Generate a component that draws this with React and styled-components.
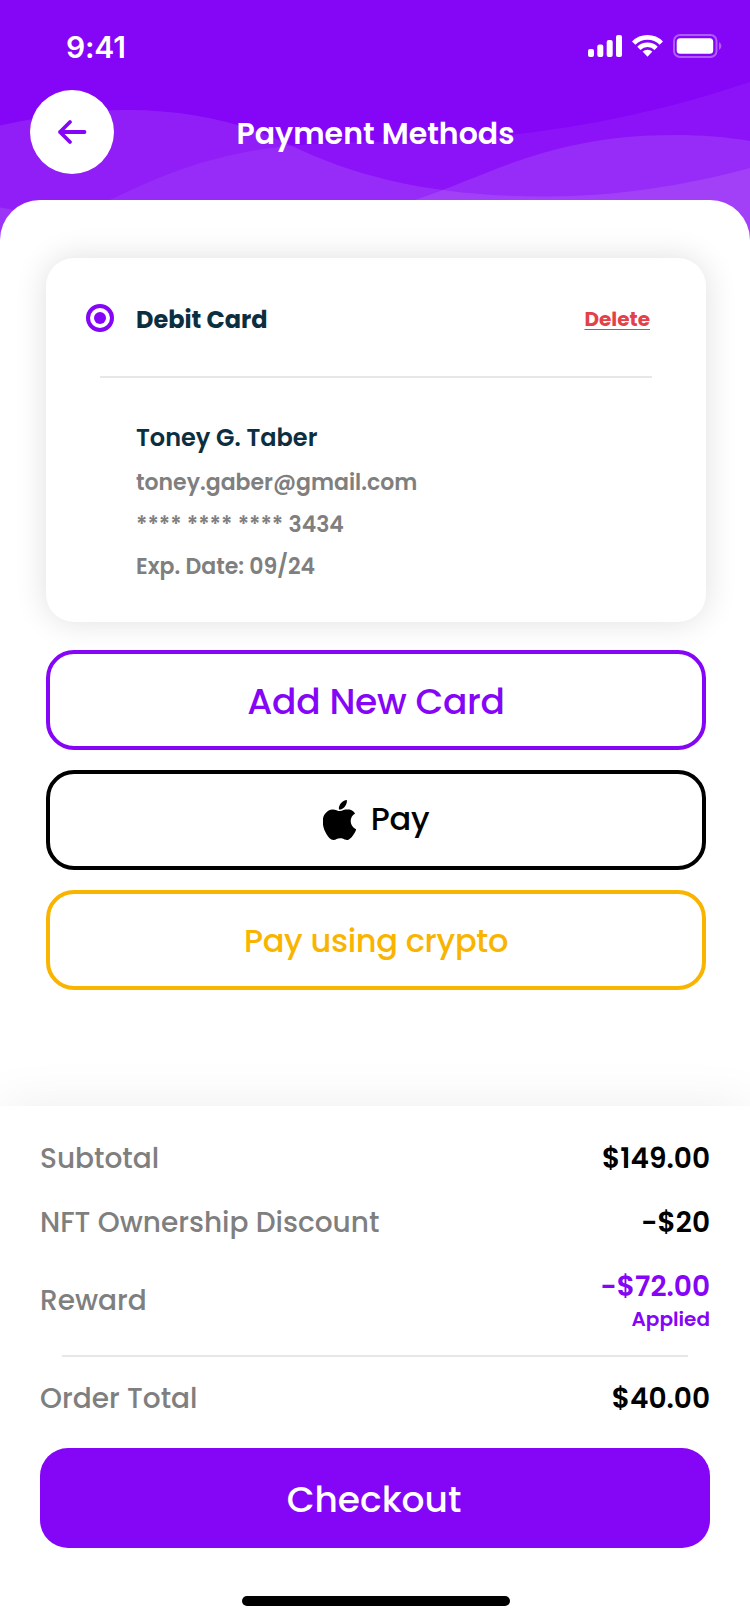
import React from "react";
import styled, { createGlobalStyle } from "styled-components";

const PURPLE = "#8505f7";
const NAVY = "#0c2e41";
const GREY = "#7f7f7f";
const YELLOW = "#f9b400";

const GlobalStyle = createGlobalStyle`
  * { box-sizing: border-box; }
  body {
    margin: 0;
    background: #fff;
    font-family: Poppins, Inter, sans-serif;
  }
  button {
    margin: 0;
    padding: 0;
    border: 0;
    background: none;
    font: inherit;
    cursor: pointer;
  }
`;

const Screen = styled.div`
  width: 750px;
  height: 1624px;
  display: flex;
  flex-direction: column;
  overflow: hidden;
  background: #fff;
`;

const Header = styled.header`
  position: relative;
  height: 240px;
  flex: none;
  color: #fff;
  background: ${PURPLE};
`;

const Waves = styled.svg`
  position: absolute;
  inset: 0;
  display: block;
`;

const StatusBar = styled.div`
  position: relative;
  height: 90px;
  padding: 2px 28px 0 65px;
  display: flex;
  align-items: center;
  justify-content: space-between;
`;

const Clock = styled.time`
  padding: 1px 0 0 1px;
  font: 600 30px/36px Inter, sans-serif;
  letter-spacing: -0.2px;
`;

const StatusIcons = styled.svg`
  display: block;
`;

const NavBar = styled.div`
  position: relative;
  height: 84px;
  padding: 0 30px;
  display: grid;
  grid-template-columns: 84px 1fr 84px;
  align-items: center;
`;

const BackButton = styled.button`
  width: 84px;
  height: 84px;
  border-radius: 50%;
  background: #fff;
  color: ${PURPLE};
  display: grid;
  place-items: center;
`;

const Title = styled.h1`
  margin: 0;
  padding: 3px 0 0 1px;
  text-align: center;
  font-size: 30px;
  line-height: 45px;
  font-weight: 600;
`;

const Sheet = styled.main`
  position: relative;
  flex: 1;
  margin-top: -40px;
  padding: 58px 44px 0 46px;
  border-radius: 40px 40px 0 0;
  background: #fff;
`;

const Card = styled.section`
  height: 364px;
  padding-top: 44px;
  border-radius: 28px;
  background: #fff;
  box-shadow: 0 0 32px rgba(0, 0, 0, 0.13);
`;

const CardHead = styled.div`
  height: 36px;
  padding: 0 56px 0 40px;
  display: flex;
  align-items: center;
  gap: 22px;
`;

const Radio = styled.span`
  width: 28px;
  height: 28px;
  margin-bottom: 4px;
  border: 4px solid ${PURPLE};
  border-radius: 50%;
  display: grid;
  place-items: center;

  &::after {
    content: "";
    width: 12px;
    height: 12px;
    border-radius: 50%;
    background: ${PURPLE};
  }
`;

const CardTitle = styled.h2`
  flex: 1;
  margin: 0;
  font-size: 24px;
  line-height: 36px;
  font-weight: 700;
  color: ${NAVY};
`;

const DeleteLink = styled.button`
  margin-bottom: 2px;
  font-size: 20px;
  line-height: 30px;
  font-weight: 700;
  color: #e34048;
  text-decoration: underline 1px;
  text-underline-offset: 3px;
  text-decoration-skip-ink: none;
`;

const Divider = styled.hr`
  height: 2px;
  margin: ${(p) => p.$margin};
  border: 0;
  background: #e7e7e7;
`;

const CardBody = styled.div`
  padding-left: 90px;
  display: flex;
  flex-direction: column;
`;

const Holder = styled.div`
  margin-bottom: 10px;
  font-size: 24px;
  line-height: 36px;
  font-weight: 600;
  color: ${NAVY};
`;

const Detail = styled.div`
  font-size: 22px;
  line-height: 33px;
  margin-bottom: 9px;
  font-weight: 600;
  color: ${GREY};
`;

const Options = styled.div`
  margin-top: 28px;
  display: flex;
  flex-direction: column;
  gap: 20px;
`;

const OptionButton = styled.button`
  height: 100px;
  padding: ${(p) => p.$pad || 0};
  border: 4px solid ${(p) => p.$color};
  border-radius: 28px;
  color: ${(p) => p.$color};
  font-size: ${(p) => p.$size}px;
  line-height: 1.5;
  font-weight: 500;
  letter-spacing: -0.3px;
  display: flex;
  align-items: center;
  justify-content: center;
  gap: 15px;
`;

const AppleLogo = styled.svg`
  width: 33px;
  height: 40px;
  margin-top: 2px;
`;

const Summary = styled.footer`
  position: relative;
  flex: none;
  height: 518px;
  padding: 32px 40px 0;
  background: #fff;
  box-shadow: 0 0 50px rgba(0, 0, 0, 0.07);
  display: flex;
  flex-direction: column;
`;

const SummaryRow = styled.div`
  margin-bottom: ${(p) => p.$gap}px;
  display: flex;
  align-items: center;
  justify-content: space-between;
  font-size: 28px;
  line-height: 42px;
`;

const Label = styled.span`
  font-weight: 500;
  color: ${GREY};
`;

const Amount = styled.span`
  display: flex;
  flex-direction: column;
  align-items: flex-end;
  font-weight: 600;
  color: ${(p) => p.$color || "#000"};
`;

const Note = styled.small`
  margin-top: -5px;
  padding-bottom: 1px;
  font-size: 20px;
  line-height: 32px;
`;

const CheckoutButton = styled.button`
  height: 100px;
  padding: 3px 2px 0 0;
  border-radius: 28px;
  background: ${PURPLE};
  color: #fff;
  font-size: 36px;
  line-height: 54px;
  font-weight: 500;
`;

const HomeIndicator = styled.div`
  width: 268px;
  height: 10px;
  margin: 48px auto 0;
  position: relative;
  left: 1px;
  border-radius: 5px;
  background: #000;
`;

export default function App() {
  return (
    <>
      <GlobalStyle />
      <Screen>
        <Header>
          <Waves width="750" height="240" viewBox="0 0 750 240" fill="#fff">
            <path
              opacity=".1"
              d="M0 125.5C45 116 85 110 128 110c62 0 116 13 162 35 70 34 150 51.500 255 51.500 72 0 140-11 205-28.500V240H0Z"
            />
            <path
              opacity=".06"
              d="M110 200C190 161 250 142 375 142c130 0 250-18 375-60v158H30Z"
            />
            <path
              opacity=".1"
              d="M415 200C490 175 550 135 675 135c27 0 52 2 75 6v99H300Z"
            />
            <path opacity=".1" d="M0 207.500C10 209 20 211 32 214V240H0Z" />
          </Waves>
          <StatusBar>
            <Clock>9:41</Clock>
            <StatusIcons width="134" height="24" viewBox="0 0 134 24" fill="#fff">
              <rect x="0" y="15" width="6" height="8" rx="2" />
              <rect x="9.300" y="10.500" width="6" height="12.500" rx="2" />
              <rect x="18.700" y="6" width="6" height="17" rx="2" />
              <rect x="28" y="1" width="6" height="22" rx="2" />
              <g fill="none" stroke="#fff">
                <path strokeWidth="4.800" d="M45.700 9.100A19.500 19.500 0 0 1 73.300 9.100" />
                <path strokeWidth="4.600" d="M50.900 14.300A12.200 12.200 0 0 1 68.100 14.300" />
              </g>
              <path d="M54.600 17.600A7.300 7.300 0 0 1 64.400 17.600L59.500 22.700Z" />
              <g opacity=".35">
                <rect x="86" y="1" width="42.500" height="22" rx="6" fill="none" stroke="#fff" strokeWidth="2" />
                <path d="M131 8a4.500 4.500 0 0 1 0 8Z" />
              </g>
              <rect x="88.700" y="4.200" width="36.500" height="15.500" rx="3.500" />
            </StatusIcons>
          </StatusBar>
          <NavBar>
            <BackButton aria-label="Back">
              <svg
                width="30"
                height="26"
                viewBox="0 0 30 26"
                fill="none"
                stroke="currentColor"
                strokeWidth="3.800"
                strokeLinecap="round"
                strokeLinejoin="round"
              >
                <path d="M27.500 13H3M13 3 3 13l10 10" />
              </svg>
            </BackButton>
            <Title>Payment Methods</Title>
          </NavBar>
        </Header>

        <Sheet>
          <Card>
            <CardHead>
              <Radio />
              <CardTitle>Debit Card</CardTitle>
              <DeleteLink>Delete</DeleteLink>
            </CardHead>
            <Divider $margin="38px 54px 42px" />
            <CardBody>
              <Holder>Toney G. Taber</Holder>
              <Detail>toney.gaber@gmail.com</Detail>
              <Detail>**** **** **** 3434</Detail>
              <Detail>Exp. Date: 09/24</Detail>
            </CardBody>
          </Card>
          <Options>
            <OptionButton $color={PURPLE} $size={36} $pad="3px 0 0">
              Add New Card
            </OptionButton>
            <OptionButton $color="#000" $size={32} $pad="0 0 2px">
              <AppleLogo viewBox="67 32 378 448" preserveAspectRatio="none" fill="currentColor">
                <path d="M349.130 136.860c-40.320 0-57.360 19.240-85.440 19.240-28.790 0-50.750-19.100-85.690-19.100-34.200 0-70.670 20.880-93.830 56.450-32.520 50.160-27 144.630 25.670 225.110 18.840 28.810 44 61.120 77 61.470h.6c28.680 0 37.200-18.780 76.670-19h.6c38.880 0 46.680 18.890 75.240 18.890h.6c33-.35 59.510-36.150 78.350-64.850 13.560-20.640 18.600-31 29-54.350-76.190-28.920-88.430-136.930-13.080-178.340-23-28.800-55.320-45.480-85.790-45.480z" />
                <path d="M340.250 32c-24 1.630-52 16.910-68.400 36.860-14.880 18.080-27.120 44.900-22.320 70.910h1.920c25.560 0 51.720-15.390 67-35.110 14.720-18.770 25.880-45.370 21.800-72.660z" />
              </AppleLogo>
              Pay
            </OptionButton>
            <OptionButton $color={YELLOW} $size={32} $pad="2px 0 0">
              Pay using crypto
            </OptionButton>
          </Options>
        </Sheet>

        <Summary>
          <SummaryRow $gap={22}>
            <Label>Subtotal</Label>
            <Amount>$149.00</Amount>
          </SummaryRow>
          <SummaryRow $gap={22}>
            <Label>NFT Ownership Discount</Label>
            <Amount>-$20</Amount>
          </SummaryRow>
          <SummaryRow $gap={19}>
            <Label>Reward</Label>
            <Amount $color={PURPLE}>
              -$72.00
              <Note>Applied</Note>
            </Amount>
          </SummaryRow>
          <Divider $margin="0 22px 21px" />
          <SummaryRow $gap={28}>
            <Label>Order Total</Label>
            <Amount>$40.00</Amount>
          </SummaryRow>
          <CheckoutButton>Checkout</CheckoutButton>
          <HomeIndicator />
        </Summary>
      </Screen>
    </>
  );
}
